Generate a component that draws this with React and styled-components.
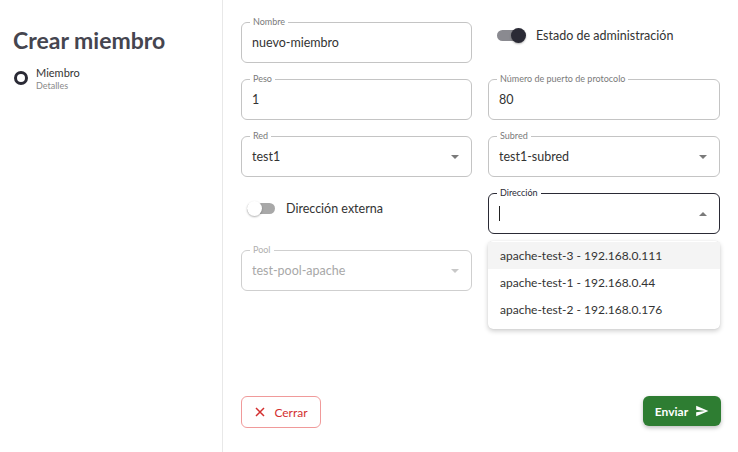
import React from 'react';
import styled, { createGlobalStyle } from 'styled-components';

const GlobalStyle = createGlobalStyle`
    html, body {
        margin: 0;
        padding: 0;
        background: #ffffff;
    }
    body {
        font-family: Lato, "Open Sans", sans-serif;
        color: #333333;
    }
`;

const options = [
    'apache-test-3 - 192.168.0.111',
    'apache-test-1 - 192.168.0.44',
    'apache-test-2 - 192.168.0.176',
];

const Field = ({ label, value, select, disabled, focused, open, children }) => (
    <FieldBox $disabled={disabled} $focused={focused}>
        <FieldLabel $disabled={disabled} $focused={focused}>{label}</FieldLabel>
        <FieldValue $disabled={disabled}>{value}</FieldValue>
        {focused && <Caret />}
        {select && <Arrow $up={open} $disabled={disabled} />}
        {children}
    </FieldBox>
);

const Toggle = ({ on, label }) => (
    <ToggleRow>
        <Track $on={on}>
            <Thumb $on={on} />
        </Track>
        <ToggleLabel>{label}</ToggleLabel>
    </ToggleRow>
);

export default function App() {
    return (
        <>
            <GlobalStyle />
            <Page>
                <Sidebar>
                    <Title>Crear miembro</Title>
                    <Step>
                        <StepDot />
                        <StepText>
                            <StepName>Miembro</StepName>
                            <StepSub>Detalles</StepSub>
                        </StepText>
                    </Step>
                </Sidebar>
                <Main>
                    <Grid>
                        <Field label="Nombre" value="nuevo-miembro" />
                        <ToggleCell>
                            <Toggle on label="Estado de administración" />
                        </ToggleCell>
                        <Field label="Peso" value="1" />
                        <Field label="Número de puerto de protocolo" value="80" />
                        <Field label="Red" value="test1" select />
                        <Field label="Subred" value="test1-subred" select />
                        <ToggleCell $inset>
                            <Toggle label="Dirección externa" />
                        </ToggleCell>
                        <Field label="Dirección" value="" select focused open>
                            <Menu>
                                {options.map((o, i) => (
                                    <MenuItem key={o} $active={i === 0}>{o}</MenuItem>
                                ))}
                            </Menu>
                        </Field>
                        <Field label="Pool" value="test-pool-apache" select disabled />
                    </Grid>
                    <Footer>
                        <CloseButton>
                            <svg width="12" height="12" viewBox="0 0 12 12">
                                <path d="M2 2 L10 10 M10 2 L2 10" stroke="#d32f2f" strokeWidth="1.5" />
                            </svg>
                            Cerrar
                        </CloseButton>
                        <SendButton>
                            Enviar
                            <svg width="14" height="14" viewBox="0 0 24 24">
                                <path d="M2.01 21L23 12 2.01 3 2 10l15 2-15 2z" fill="#ffffff" />
                            </svg>
                        </SendButton>
                    </Footer>
                </Main>
            </Page>
        </>
    );
}

const Page = styled.div`
    display: flex;
    height: 452px;
    width: 738px;
    overflow: hidden;
`;

const Sidebar = styled.aside`
    width: 223px;
    flex-shrink: 0;
    border-right: 1px solid #e8e8e8;
    padding: 26px 0 0 13px;
    box-sizing: border-box;
`;

const Title = styled.h1`
    margin: 0;
    font-size: 23px;
    font-weight: 700;
    color: #45454f;
`;

const Step = styled.div`
    display: flex;
    align-items: flex-start;
    gap: 8px;
    margin-top: 12px;
`;

const StepDot = styled.div`
    width: 8px;
    height: 8px;
    margin-top: 5px;
    margin-left: 1px;
    border: 3px solid #2a2a35;
    border-radius: 50%;
`;

const StepText = styled.div`
    display: flex;
    flex-direction: column;
`;

const StepName = styled.span`
    font-size: 11px;
    color: #333;
    line-height: 14px;
`;

const StepSub = styled.span`
    font-size: 9px;
    color: #8a8a8a;
    line-height: 12px;
`;

const Main = styled.main`
    flex: 1;
    display: flex;
    flex-direction: column;
    padding: 22px 17px 24px 18px;
    box-sizing: border-box;
`;

const Grid = styled.div`
    display: grid;
    grid-template-columns: 231px 232px;
    column-gap: 16px;
    row-gap: 16px;
`;

const FieldBox = styled.div`
    position: relative;
    height: 41px;
    box-sizing: border-box;
    border: 1px solid ${p => (p.$focused ? '#2a2a35' : p.$disabled ? '#cfcfcf' : '#c4c4c4')};
    border-radius: 6px;
    display: flex;
    align-items: center;
    padding: 0 10px;
`;

const FieldLabel = styled.span`
    position: absolute;
    top: -7px;
    left: 8px;
    padding: 0 3px;
    background: #ffffff;
    font-size: 9px;
    line-height: 12px;
    color: ${p => (p.$focused ? '#2a2a35' : p.$disabled ? '#b0b0b0' : '#7a7a7a')};
`;

const FieldValue = styled.span`
    font-size: 12.5px;
    color: ${p => (p.$disabled ? '#a8a8a8' : '#333333')};
`;

const Caret = styled.span`
    width: 1px;
    height: 15px;
    background: #222;
`;

const Arrow = styled.span`
    position: absolute;
    right: 12px;
    top: 50%;
    width: 0;
    height: 0;
    margin-top: -2px;
    border-left: 4px solid transparent;
    border-right: 4px solid transparent;
    ${p => (p.$up ? 'border-bottom' : 'border-top')}: 4px solid ${p => (p.$disabled ? '#c8c8c8' : '#7a7a7a')};
`;

const ToggleCell = styled.div`
    display: flex;
    align-items: flex-start;
    height: 41px;
    box-sizing: border-box;
    padding-top: ${p => (p.$inset ? '8px' : '6px')};
    padding-left: ${p => (p.$inset ? '6px' : '9px')};
`;

const ToggleRow = styled.div`
    display: flex;
    align-items: center;
    gap: 11px;
`;

const Track = styled.div`
    position: relative;
    width: 28px;
    height: 11px;
    border-radius: 6px;
    background: ${p => (p.$on ? '#8a8a90' : '#a8a8a8')};
`;

const Thumb = styled.div`
    position: absolute;
    top: -2px;
    left: ${p => (p.$on ? '14px' : '0')};
    width: 15px;
    height: 15px;
    border-radius: 50%;
    background: ${p => (p.$on ? '#2a2a35' : '#ffffff')};
    box-shadow: 0 1px 2px rgba(0, 0, 0, 0.3);
`;

const ToggleLabel = styled.span`
    font-size: 12.5px;
    color: #333;
`;

const Menu = styled.div`
    position: absolute;
    top: 47px;
    left: -1px;
    right: -1px;
    background: #ffffff;
    border-radius: 5px;
    box-shadow: 0 2px 5px rgba(0, 0, 0, 0.2), 0 0 1px rgba(0, 0, 0, 0.15);
    padding: 1px 0 6px;
    z-index: 2;
`;

const MenuItem = styled.div`
    height: 27px;
    display: flex;
    align-items: center;
    padding: 0 12px;
    font-size: 12px;
    color: #333;
    background: ${p => (p.$active ? '#f4f4f4' : 'transparent')};
`;

const Footer = styled.div`
    margin-top: auto;
    display: flex;
    justify-content: space-between;
    align-items: flex-start;
`;

const CloseButton = styled.button`
    display: flex;
    align-items: center;
    gap: 8px;
    height: 32px;
    width: 80px;
    justify-content: center;
    box-sizing: border-box;
    border: 1px solid #f09a9a;
    border-radius: 6px;
    background: #ffffff;
    color: #d32f2f;
    font-family: inherit;
    font-size: 12px;
`;

const SendButton = styled.button`
    display: flex;
    align-items: center;
    justify-content: center;
    gap: 7px;
    height: 30px;
    width: 78px;
    border: none;
    border-radius: 6px;
    background: #2e7d32;
    color: #ffffff;
    font-family: inherit;
    font-size: 12px;
    font-weight: 700;
    box-shadow: 0 2px 4px rgba(0, 0, 0, 0.25);
`;
